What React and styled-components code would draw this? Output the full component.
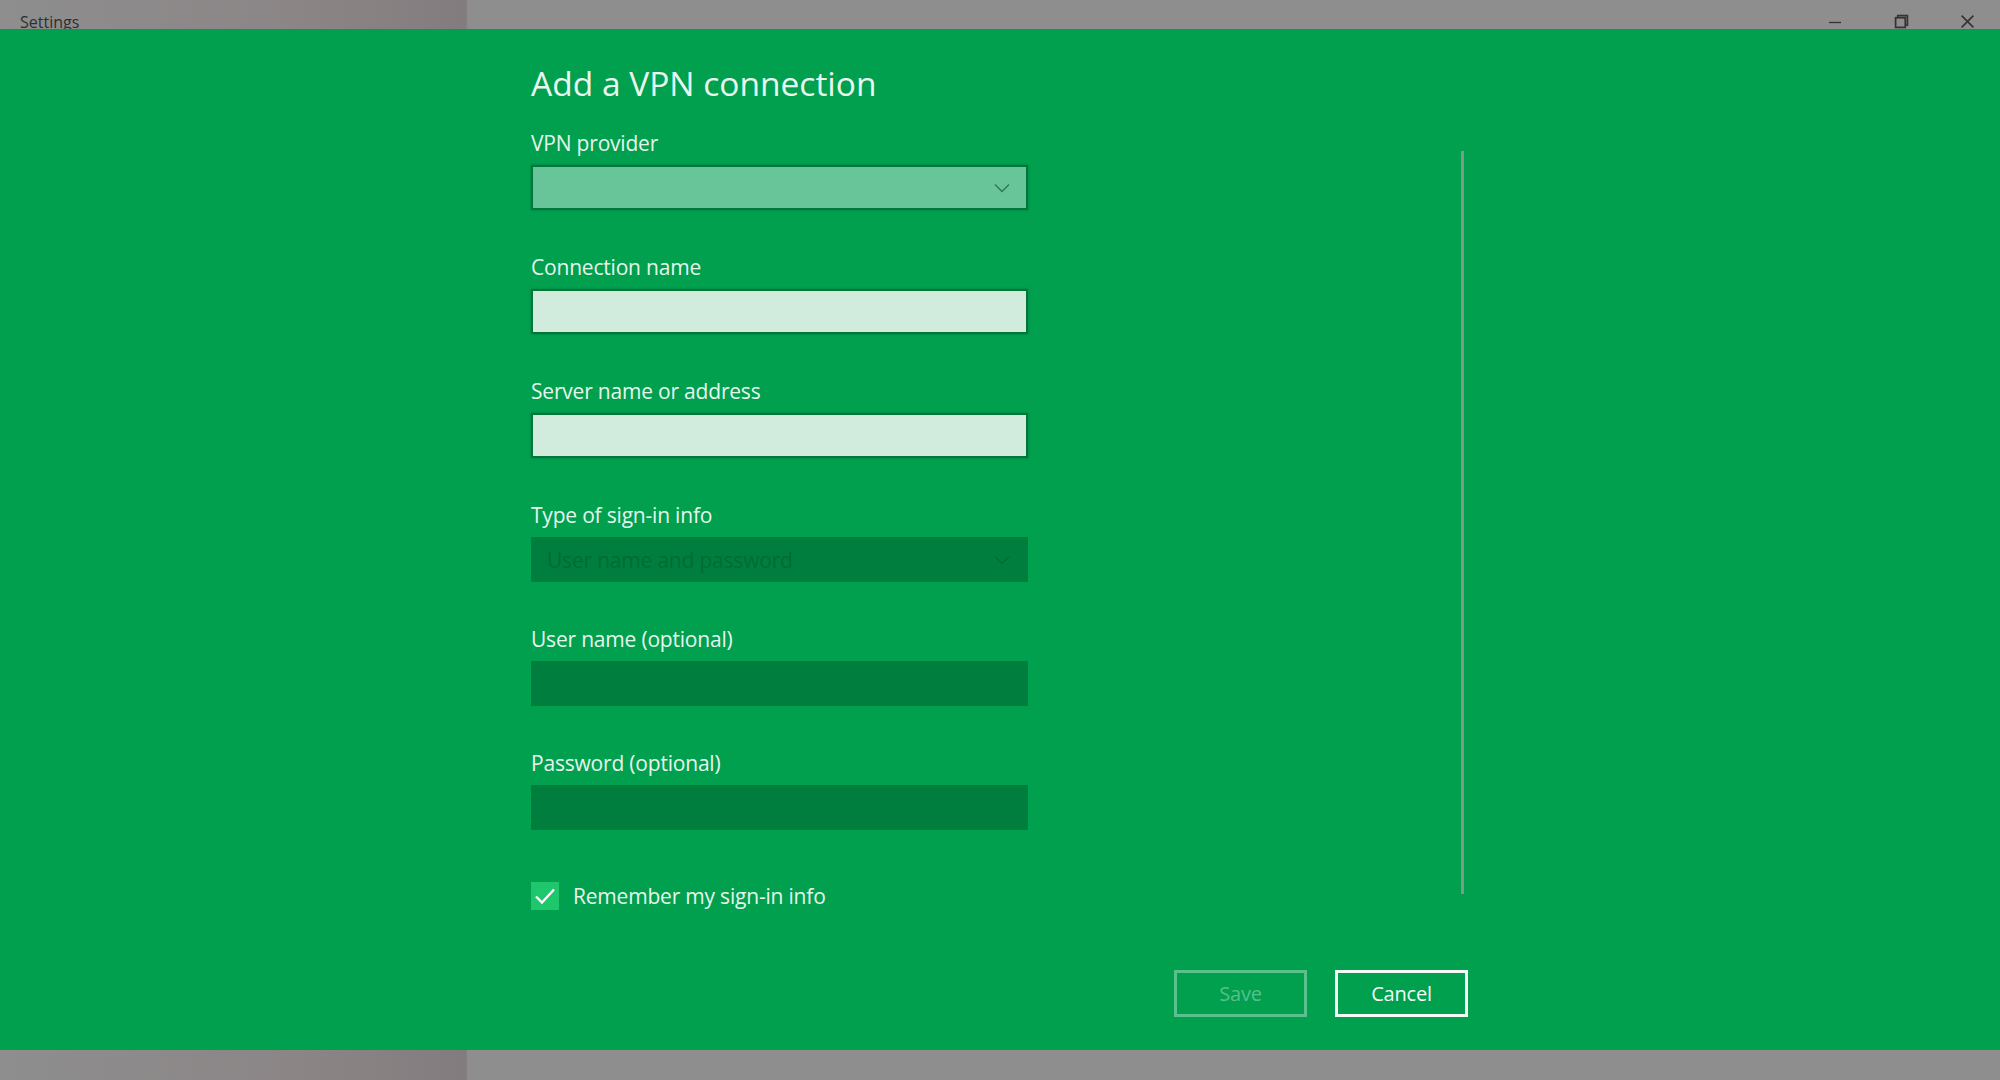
import React from 'react';
import styled, { createGlobalStyle } from 'styled-components';

const GlobalStyle = createGlobalStyle`
  html, body {
    margin: 0;
    padding: 0;
    height: 100%;
    background: #8d8d8d;
  }
  #root {
    height: 100%;
  }
  * {
    box-sizing: border-box;
  }
`;

const Window = styled.div`
  width: 2000px;
  height: 1080px;
  display: flex;
  flex-direction: column;
  font-family: "Open Sans", "Liberation Sans", sans-serif;
  overflow: hidden;
`;

const Strip = styled.div`
  height: ${p => p.$height}px;
  display: flex;
  align-items: center;
  flex-shrink: 0;
  background: linear-gradient(90deg, #8e8e8e 0px, #8b8586 300px, #837c7e 466px, #8e8e8e 468px, #8e8e8e 100%);
`;

const TitleText = styled.div`
  padding: 14px 0 0 20px;
  font-size: 16px;
  color: #2e2e2e;
`;

const Controls = styled.div`
  margin-left: auto;
  display: flex;
  align-items: center;
  height: 100%;
  padding-top: 14px;
`;

const ControlButton = styled.div`
  width: 66px;
  display: flex;
  align-items: center;
  justify-content: center;
  color: #333;
`;

const Main = styled.main`
  flex: 1;
  background: #00a04f;
  padding: 32px 0 0 531px;
  display: flex;
  flex-direction: column;
`;

const Column = styled.div`
  width: 937px;
  display: flex;
  flex-direction: column;
`;

const ScrollArea = styled.div`
  display: flex;
  align-items: flex-start;
`;

const Form = styled.div`
  flex: 1;
  display: flex;
  flex-direction: column;
`;

const Heading = styled.h1`
  margin: 0 0 25px;
  font-size: 33.5px;
  line-height: 44px;
  font-weight: 400;
  color: #eaf7ef;
`;

const Field = styled.div`
  display: flex;
  flex-direction: column;
  gap: 9px;
  margin-bottom: 44px;
  width: 497px;
`;

const Label = styled.label`
  font-size: 21px;
  line-height: 26px;
  color: #e6f5ec;
  letter-spacing: -0.2px;
`;

const boxColors = {
  select: { bg: '#68c59a', border: '#00763a' },
  input: { bg: '#d1ecdd', border: '#00763a' },
  disabled: { bg: '#007e3e', border: '#007e3e' },
};

const Box = styled.div`
  height: 45px;
  display: flex;
  align-items: center;
  padding: 0 14px;
  background: ${p => boxColors[p.$kind].bg};
  border: 2px solid ${p => boxColors[p.$kind].border};
  box-shadow: ${p => (p.$kind === 'disabled' ? 'none' : '0 0 2px rgba(0, 80, 40, 0.5)')};
`;

const Placeholder = styled.span`
  font-size: 21px;
  color: #006c33;
  letter-spacing: -0.2px;
`;

const Chevron = styled.svg`
  margin-left: auto;
  margin-right: 2px;
`;

const CheckRow = styled.div`
  display: flex;
  align-items: center;
  gap: 14px;
  margin-top: 8px;
  line-height: 28px;
`;

const CheckBox = styled.div`
  width: 28px;
  height: 28px;
  background: #1ec66c;
  display: flex;
  align-items: center;
  justify-content: center;
`;

const CheckLabel = styled.span`
  font-size: 21px;
  color: #e6f5ec;
  letter-spacing: -0.2px;
`;

const Scrollbar = styled.div`
  width: 3px;
  height: 743px;
  margin-top: 90px;
  margin-right: 4px;
  background: #7a9c86;
`;

const Buttons = styled.div`
  display: flex;
  justify-content: flex-end;
  gap: 28px;
  margin-top: 60px;
`;

const Button = styled.button`
  width: 133px;
  height: 47px;
  background: transparent;
  font-family: inherit;
  font-size: 20px;
  letter-spacing: -0.2px;
  border: 3px solid ${p => (p.$disabled ? 'rgba(255, 255, 255, 0.35)' : '#f4fbf7')};
  color: ${p => (p.$disabled ? 'rgba(255, 255, 255, 0.35)' : '#f4fbf7')};
  cursor: ${p => (p.$disabled ? 'default' : 'pointer')};
`;

const ChevronDown = ({ color }) => (
  <Chevron width="16" height="10" viewBox="0 0 16 10">
    <path d="M1 1.5 L8 8.5 L15 1.5" fill="none" stroke={color} strokeWidth="1.4" />
  </Chevron>
);

const fields = [
  { label: 'VPN provider', kind: 'select' },
  { label: 'Connection name', kind: 'input' },
  { label: 'Server name or address', kind: 'input' },
  { label: 'Type of sign-in info', kind: 'disabled', value: 'User name and password', chevron: true },
  { label: 'User name (optional)', kind: 'disabled' },
  { label: 'Password (optional)', kind: 'disabled' },
];

export default function App() {
  return (
    <Window>
      <GlobalStyle />
      <Strip $height={29}>
        <TitleText>Settings</TitleText>
        <Controls>
          <ControlButton>
            <svg width="14" height="14" viewBox="0 0 14 14">
              <path d="M1 7.5 H13" stroke="#333" strokeWidth="1.3" />
            </svg>
          </ControlButton>
          <ControlButton>
            <svg width="15" height="15" viewBox="0 0 14 14">
              <rect x="1.5" y="3.5" width="9" height="9" fill="none" stroke="#333" strokeWidth="1.6" />
              <path d="M3.5 3.5 V1.5 H12.5 V10.5 H10.5" fill="none" stroke="#333" strokeWidth="1.6" />
            </svg>
          </ControlButton>
          <ControlButton>
            <svg width="15" height="15" viewBox="0 0 14 14">
              <path d="M1.5 1.5 L12.5 12.5 M12.5 1.5 L1.5 12.5" stroke="#333" strokeWidth="1.5" />
            </svg>
          </ControlButton>
        </Controls>
      </Strip>
      <Main>
        <Column>
          <ScrollArea>
            <Form>
              <Heading>Add a VPN connection</Heading>
              {fields.map(f => (
                <Field key={f.label}>
                  <Label>{f.label}</Label>
                  <Box $kind={f.kind}>
                    {f.value && <Placeholder>{f.value}</Placeholder>}
                    {f.kind === 'select' && <ChevronDown color="#2b7a50" />}
                    {f.chevron && <ChevronDown color="#006c33" />}
                  </Box>
                </Field>
              ))}
              <CheckRow>
                <CheckBox>
                  <svg width="22" height="18" viewBox="0 0 22 18">
                    <path d="M2 9.5 L8 15.5 L20 2.5" fill="none" stroke="#fff" strokeWidth="2.4" />
                  </svg>
                </CheckBox>
                <CheckLabel>Remember my sign-in info</CheckLabel>
              </CheckRow>
            </Form>
            <Scrollbar />
          </ScrollArea>
          <Buttons>
            <Button $disabled>Save</Button>
            <Button>Cancel</Button>
          </Buttons>
        </Column>
      </Main>
      <Strip $height={30} />
    </Window>
  );
}
